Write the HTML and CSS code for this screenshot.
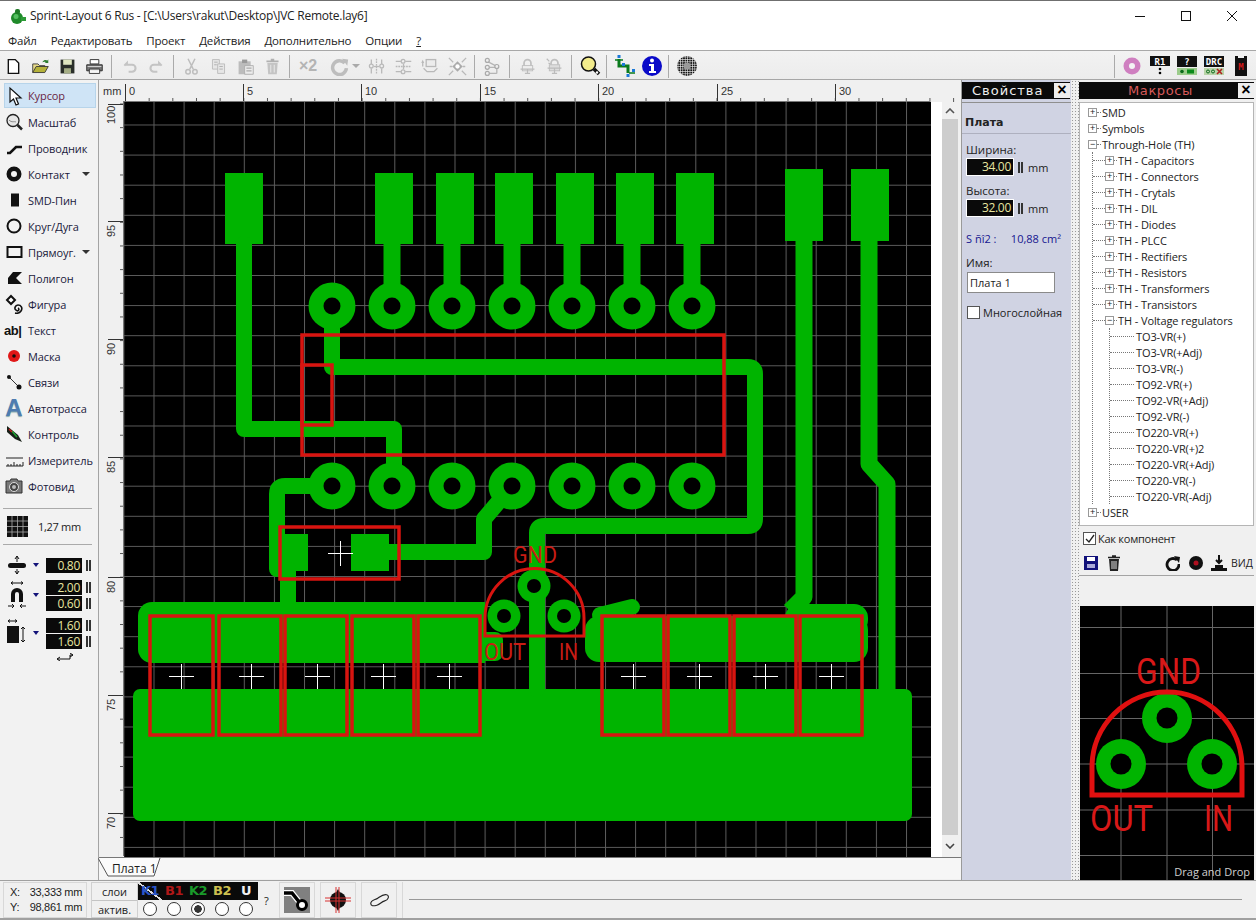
FILE: index.html
```html
<!DOCTYPE html>
<html lang="ru">
<head>
<meta charset="utf-8">
<title>Sprint-Layout 6 Rus</title>
<link rel="stylesheet" href="styles.css">
</head>
<body>
<div class="app">
  <header class="titlebar">
    <svg class="app-icon" viewBox="0 0 18 18" width="18" height="18"><circle cx="8" cy="11" r="6" fill="#1f8a2a"/><circle cx="7" cy="9.5" r="2.5" fill="#55c060"/><rect x="6" y="2" width="5" height="5" rx="2" fill="#1f7a26"/><rect x="12" y="10" width="5" height="4" fill="#2c9a36"/></svg>
    <span class="title-text">Sprint-Layout 6 Rus - [C:\Users\rakut\Desktop\JVC Remote.lay6]</span>
    <div class="win-controls">
      <svg viewBox="0 0 10 10" width="10" height="10"><path d="M0 5.5H10" stroke="#111" fill="none"/></svg>
      <svg viewBox="0 0 10 10" width="10" height="10"><rect x=".5" y=".5" width="9" height="9" stroke="#111" fill="none"/></svg>
      <svg viewBox="0 0 10 10" width="10" height="10"><path d="M0 0L10 10M10 0L0 10" stroke="#111" fill="none"/></svg>
    </div>
  </header>
  <nav class="menubar">
    <span>Файл</span><span>Редактировать</span><span>Проект</span><span>Действия</span><span>Дополнительно</span><span>Опции</span><span class="u">?</span>
  </nav>
  <div class="toolbar">
    <div class="tb"><svg viewBox="0 0 22 22"><path d="M5 3h8l4 4v12H5z" fill="#fff" stroke="#111" stroke-width="1.6"/></svg></div>
    <div class="tb"><svg viewBox="0 0 22 22"><path d="M2 18V8h6l2 2h6v2" fill="#e6d98a" stroke="#333"/><path d="M2 18l4-7h14l-4 7z" fill="#b5b23a" stroke="#333"/><path d="M13 6c2-3 4-3 6-2l1-1v4h-4l1-1c-1-1-3 0-4 0z" fill="#2f7d2f"/></svg></div>
    <div class="tb"><svg viewBox="0 0 22 22"><path d="M3 3h16v16H3z" fill="#2a2f2a"/><rect x="6" y="3" width="10" height="6" fill="#dfe6c0"/><rect x="7" y="13" width="8" height="6" fill="#a5ae86"/></svg></div>
    <div class="tb"><svg viewBox="0 0 22 22"><path d="M6 3h10v5H6z" fill="#fff" stroke="#222"/><path d="M2 9h18v7H2z" fill="#777" stroke="#222"/><path d="M5 14h12v5H5z" fill="#fff" stroke="#222"/><path d="M3 11h16M6 16h10" stroke="#ddd"/></svg></div>
    <i class="sep"></i>
    <div class="tb"><svg viewBox="0 0 22 22"><path d="M5 10l3-3v2h6a4 4 0 010 8h-4" fill="none" stroke="#c4c4c4" stroke-width="2.4"/></svg></div>
    <div class="tb"><svg viewBox="0 0 22 22"><path d="M17 10l-3-3v2H8a4 4 0 000 8h4" fill="none" stroke="#c4c4c4" stroke-width="2.4"/></svg></div>
    <i class="sep"></i>
    <div class="tb"><svg viewBox="0 0 22 22"><g fill="none" stroke="#bdbdbd" stroke-width="1.7"><path d="M7 2l6 12M15 2L9 14"/><circle cx="7" cy="17" r="2.6"/><circle cx="15" cy="17" r="2.6"/></g></svg></div>
    <div class="tb"><svg viewBox="0 0 22 22"><g fill="#e6e6e6" stroke="#b8b8b8"><path d="M4 3h8v11H4z"/><path d="M10 8h8v11h-8z"/></g><path d="M6 6h4M6 9h3M12 11h4M12 14h4" stroke="#aaa"/></svg></div>
    <div class="tb"><svg viewBox="0 0 22 22"><path d="M3 5h14v15H3z" fill="#bcbcbc"/><rect x="7" y="3" width="6" height="4" fill="#9a9a9a"/><path d="M10 10h10v10H10z" fill="#ececec" stroke="#aaa"/><path d="M12 13h6M12 16h6" stroke="#aaa" stroke-width="1.4"/></svg></div>
    <div class="tb"><svg viewBox="0 0 22 22"><path d="M5 7h12l-1 13H6z" fill="#c4c4c4"/><path d="M4 5h14M9 3h4" stroke="#b0b0b0" stroke-width="2"/><path d="M9 9v9M13 9v9" stroke="#eee"/></svg></div>
    <i class="sep"></i>
    <div class="tb tb-x2">×2</div>
    <div class="tb tb-wide"><svg viewBox="0 0 22 22"><path d="M17 7a8 8 0 10 2 6" fill="none" stroke="#bdbdbd" stroke-width="4"/><path d="M14 2l7 1-1 7z" fill="#bdbdbd"/></svg><span class="caret gray"></span></div>
    <div class="tb"><svg viewBox="0 0 22 22"><g fill="none" stroke="#b9b9b9" stroke-width="1.5"><path d="M11 2v18" stroke-dasharray="2 1"/><path d="M5 3v5M5 13v6M17 3v5M17 13v6"/><circle cx="5" cy="10.500" r="2.200"/><circle cx="17" cy="10.500" r="2.200"/><path d="M8 11h6"/></g></svg></div>
    <div class="tb"><svg viewBox="0 0 22 22"><g fill="none" stroke="#b9b9b9" stroke-width="1.5"><path d="M2 11h18" stroke-dasharray="2 1"/><path d="M2 5h6M13 5h7M2 17h6M13 17h7"/><circle cx="10.500" cy="5" r="2.200"/><circle cx="10.500" cy="17" r="2.200"/><path d="M11 8v6"/></g></svg></div>
    <div class="tb"><svg viewBox="0 0 22 22"><g fill="none" stroke="#b9b9b9" stroke-width="1.500"><rect x="6" y="3" width="11" height="8" fill="#ececec"/><path d="M3 13l4 4h8l4-4M2 5v6M1 7l1-2 1 2"/></g></svg></div>
    <div class="tb"><svg viewBox="0 0 22 22"><g fill="none" stroke="#b9b9b9" stroke-width="1.500"><path d="M1 1l5 5M21 1l-5 5M1 21l5-5M21 21l-5-5M2 11h3M17 11h3"/></g><path d="M11 5l6 6-6 6-6-6z" fill="#aaa"/><circle cx="11" cy="11" r="2.500" fill="#fff"/></svg></div>
    <i class="sep"></i>
    <div class="tb"><svg viewBox="0 0 22 22"><g fill="none" stroke="#b5b5b5" stroke-width="1.500"><path d="M5 5l11 6v8M5 12h11M5 19h11"/></g><g fill="#eee" stroke="#aaa" stroke-width="1.400"><circle cx="5" cy="4" r="2.300"/><circle cx="5" cy="12" r="2.300"/><circle cx="5" cy="19" r="2.300"/><circle cx="16" cy="11" r="2.300"/></g></svg></div>
    <i class="sep"></i>
    <div class="tb"><svg viewBox="0 0 22 22"><path d="M7 10V7a4 4 0 018 0v3" fill="none" stroke="#c0c0c0" stroke-width="2"/><rect x="5" y="10" width="12" height="6" fill="#eee" stroke="#bbb"/><path d="M3 14h16M8 19h6M11 14v5" stroke="#bbb" stroke-width="1.400"/></svg></div>
    <div class="tb"><svg viewBox="0 0 22 22"><path d="M7 9V7a4 4 0 018 0v2" fill="none" stroke="#c0c0c0" stroke-width="2"/><rect x="5" y="9" width="12" height="7" fill="#ddd" stroke="#bbb"/><path d="M3 13h16M8 19h6M11 13v6M2 2l3 3M4 7l2 1" stroke="#bbb" stroke-width="1.400"/></svg></div>
    <i class="sep"></i>
    <div class="tb tb-big"><svg viewBox="0 0 22 22"><circle cx="9.500" cy="9" r="7" fill="#f3ec8c" stroke="#111" stroke-width="1.500"/><path d="M15 14l5 5" stroke="#111" stroke-width="3.500"/><circle cx="18" cy="17.500" r="1.200" fill="#fff"/></svg></div>
    <i class="sep"></i>
    <div class="tb tb-big"><svg viewBox="0 0 22 22"><path d="M5 4V11H14V18" fill="none" stroke="#0a7a1c" stroke-width="3"/><path d="M1 5h8M15 18h6" stroke="#0a7a1c" stroke-width="1.500"/><rect x="3.500" y="0" width="3" height="3" fill="#1a78d8"/><rect x="8" y="8" width="3" height="3" fill="#1a78d8"/><rect x="12.500" y="19" width="3" height="3" fill="#1a78d8"/><rect x="18" y="14" width="3" height="3" fill="#1a78d8"/></svg></div>
    <div class="tb tb-big"><svg viewBox="0 0 22 22"><circle cx="11" cy="11" r="10" fill="#0a0ac8"/><circle cx="11" cy="5.500" r="2" fill="#fff"/><path d="M8 9h5v7h2v2H8v-2h2v-5H8z" fill="#fff"/></svg></div>
    <i class="sep"></i>
    <div class="tb tb-big"><svg viewBox="0 0 22 22"><defs><pattern id="dots" width="2.400" height="2.400" patternUnits="userSpaceOnUse"><rect width="1.800" height="1.800" fill="#111"/></pattern></defs><circle cx="11" cy="11" r="10" fill="url(#dots)"/><circle cx="11" cy="11" r="3.500" fill="#9a9a9a"/></svg></div>
    <div class="tb-spacer"></div>
    <i class="sep"></i>
    <div class="tb tb-big"><svg viewBox="0 0 22 22"><circle cx="10" cy="11" r="8.500" fill="#cf7fc0"/><circle cx="10" cy="11" r="3" fill="#f4f4f4"/></svg></div>
    <div class="tb tb-big"><svg viewBox="0 0 22 22"><rect x="1" y="1" width="20" height="10" fill="#111"/><text x="11" y="9.500" class="ico-txt" fill="#fff">R1</text><circle cx="11" cy="14" r="1.300"/><circle cx="11" cy="18" r="1.300"/></svg></div>
    <div class="tb tb-big"><svg viewBox="0 0 22 22"><rect x="1" y="1" width="20" height="11" fill="#111"/><text x="11" y="10" class="ico-txt" fill="#fff">?</text><rect x="1" y="13" width="20" height="7" fill="#9ccc8c"/><circle cx="6" cy="16.500" r="1.800" fill="#0a6a1a"/><rect x="11" y="14.500" width="7" height="4" fill="#0a8a1a"/></svg></div>
    <div class="tb tb-big"><svg viewBox="0 0 22 22"><rect x="1" y="1" width="20" height="11" fill="#111"/><text x="11" y="10" class="ico-txt" fill="#fff">DRC</text><rect x="1" y="13" width="20" height="7" fill="#b8d4a8"/><circle cx="5" cy="16.500" r="1.500" fill="none" stroke="#0a6a1a"/><circle cx="10" cy="16.500" r="1.500" fill="none" stroke="#0a6a1a"/><path d="M14 14l5 5M19 14l-5 5" stroke="#b02020" stroke-width="1.600"/></svg></div>
    <div class="tb tb-big"><svg viewBox="0 0 22 22"><path d="M5 1h3v2h6V1h3v20H5z" fill="#111"/><text x="11" y="15" class="ico-txt" fill="#d01818">M</text></svg></div>
  </div>

  <div class="workspace">
    <aside class="tools">
      <div class="tool active"><svg viewBox="0 0 20 20"><path d="M6 2v14l3.500-3 2.500 6 2.500-1-2.500-6h5z" fill="#fff" stroke="#111" stroke-width="1.200"/></svg><span class="lbl lbl-active">Курсор</span></div>
      <div class="tool"><svg viewBox="0 0 20 20"><circle cx="9" cy="8.500" r="6" fill="#e6e6e6" stroke="#222" stroke-width="1.300"/><path d="M13.500 13l4.500 4.500" stroke="#222" stroke-width="2.500"/><path d="M5 8c3 3 5 1 7 2" stroke="#888" fill="none"/></svg><span class="lbl">Масштаб</span></div>
      <div class="tool"><svg viewBox="0 0 20 20"><path d="M3 15h3l6-6h6" fill="none" stroke="#111" stroke-width="2.600"/></svg><span class="lbl">Проводник</span></div>
      <div class="tool"><svg viewBox="0 0 20 20"><circle cx="10" cy="10" r="5.250" fill="none" stroke="#111" stroke-width="4.500"/></svg><span class="lbl">Контакт</span><span class="caret"></span></div>
      <div class="tool"><svg viewBox="0 0 20 20"><rect x="7" y="3.500" width="8" height="13" fill="#111"/></svg><span class="lbl">SMD-Пин</span></div>
      <div class="tool"><svg viewBox="0 0 20 20"><circle cx="10" cy="10" r="6.500" fill="none" stroke="#111" stroke-width="2"/></svg><span class="lbl">Круг/Дуга</span></div>
      <div class="tool"><svg viewBox="0 0 20 20"><rect x="3.500" y="5" width="14" height="10" fill="none" stroke="#111" stroke-width="2"/></svg><span class="lbl">Прямоуг.</span><span class="caret"></span></div>
      <div class="tool"><svg viewBox="0 0 20 20"><path d="M4 10l5-6h9l-6 6 6 6H4z" fill="#111"/></svg><span class="lbl">Полигон</span></div>
      <div class="tool"><svg viewBox="0 0 20 20"><path d="M7 2l4 4-4 4-4-4z" fill="#fff" stroke="#111" stroke-width="2"/><path d="M14 14a1.500 1.500 0 11-2 2c-2-1-1-5 2-5s5 3 3 6-6 2-6 2" fill="none" stroke="#111" stroke-width="1.600"/></svg><span class="lbl">Фигура</span></div>
      <div class="tool"><span class="ab">ab|</span><span class="lbl">Текст</span></div>
      <div class="tool"><svg viewBox="0 0 20 20"><circle cx="10" cy="10" r="6" fill="#e01818"/><circle cx="10" cy="10" r="1.800" fill="#111"/></svg><span class="lbl">Маска</span></div>
      <div class="tool"><svg viewBox="0 0 20 20"><path d="M5 5l10 10" stroke="#333" stroke-width="1"/><circle cx="5" cy="5" r="2" fill="#111"/><circle cx="15" cy="15" r="2.500" fill="#111"/></svg><span class="lbl">Связи</span></div>
      <div class="tool"><span class="auto-a">A</span><span class="lbl">Автотрасса</span></div>
      <div class="tool"><svg viewBox="0 0 20 20"><path d="M3 2l11 9 4 7-7-3L3 8z" fill="#182018"/><path d="M8 7l5 6" stroke="#20a030" stroke-width="1.500"/><path d="M5 5l3 3" stroke="#c02020" stroke-width="1.500"/></svg><span class="lbl">Контроль</span></div>
      <div class="tool"><svg viewBox="0 0 20 20"><path d="M2 8h17" stroke="#222"/><path d="M2 16h17M4 16v-2M7 16v-2M10 16v-4M13 16v-2M16 16v-2M19 16v-4" stroke="#222" fill="none"/></svg><span class="lbl">Измеритель</span></div>
      <div class="tool"><svg viewBox="0 0 20 20"><path d="M2 5h4l1-2h6l1 2h4v12H2z" fill="#777" stroke="#333"/><circle cx="10" cy="11" r="4.500" fill="#444" stroke="#ddd"/><circle cx="10" cy="11" r="2" fill="#bbb"/></svg><span class="lbl">Фотовид</span></div>

      <hr class="rule rule-a">
      <div class="gridsize">
        <svg viewBox="0 0 21 21" width="21" height="21"><rect width="21" height="21" fill="#111"/><path d="M5 0v21M10.500 0v21M16 0v21M0 5h21M0 10.500h21M0 16h21" stroke="#aaa" stroke-width=".8"/></svg>
        <span>1,27 mm</span>
      </div>
      <hr class="rule rule-b">
      <div class="param">
        <svg class="param-ico" viewBox="0 0 20 20"><rect x="1" y="8" width="18" height="5" rx="2.500" fill="#111"/><path d="M10 1v6M8 4l2-3 2 3M10 14v5M8 16l2 3 2-3" fill="none" stroke="#111"/></svg>
        <span class="caret navy"></span>
        <div class="fields"><div class="field-row"><b class="num">0.80</b><i class="spin"></i></div></div>
      </div>
      <div class="param param-tall">
        <svg class="param-ico tall" viewBox="0 0 20 30"><path d="M4 3h12M4 3l2-1.500M4 3l2 1.500M16 3l-2-1.500M16 3l-2 1.500" stroke="#111" fill="none"/><path d="M5 21v-7a5 5 0 0110 0v7h-2v-7a3 3 0 00-6 0v7z" fill="#111" stroke="#111" stroke-width="2"/><path d="M1 26h6M7 26l-2-2M7 26l-2 2M19 26h-6M13 26l2-2M13 26l2 2" stroke="#111" fill="none"/></svg>
        <span class="caret navy"></span>
        <div class="fields"><div class="field-row"><b class="num">2.00</b><i class="spin"></i></div><div class="field-row"><b class="num">0.60</b><i class="spin"></i></div></div>
      </div>
      <div class="param param-tall">
        <svg class="param-ico tall" viewBox="0 0 20 30"><path d="M1 3h9M1 3l2-1.500M1 3l2 1.500M10 3L8 1.500M10 3L8 4.500" stroke="#111" fill="none"/><rect x="0" y="8" width="12" height="17" fill="#111"/><path d="M16 9v15M14 11l2-2 2 2M14 22l2 2 2-2" stroke="#111" fill="none"/></svg>
        <span class="caret navy"></span>
        <div class="fields"><div class="field-row"><b class="num">1.60</b><i class="spin"></i></div><div class="field-row"><b class="num">1.60</b><i class="spin"></i></div></div>
      </div>
      <div class="swap"><svg viewBox="0 0 20 8" width="20" height="8"><path d="M2 6h13V2h3M2 6l3-2M2 6l3 2M18 2l-3-2M18 2l-3 2" stroke="#111" fill="none"/></svg></div>
    </aside>

    <main class="editor">
      <div class="rul-corner">mm</div>
      <div class="rul-top">
        <svg width="836" height="22" viewBox="124 81 836 22">
          <defs><pattern id="tm" x="125" y="99" width="23.660" height="4" patternUnits="userSpaceOnUse"><rect width="1" height="4" fill="#555"/></pattern></defs>
          <rect x="125" y="99" width="835" height="4" fill="url(#tm)"/>
          <g stroke="#333"><path d="M125.500 85v18M243.500 85v18M361.500 85v18M480.500 85v18M598.500 85v18M717.500 85v18M835.500 85v18"/></g>
          <g class="rul-num"><text x="129" y="96">0</text><text x="247" y="96">5</text><text x="365" y="96">10</text><text x="484" y="96">15</text><text x="602" y="96">20</text><text x="721" y="96">25</text><text x="839" y="96">30</text></g>
        </svg>
      </div>
      <div class="rul-left">
        <svg width="25" height="755" viewBox="99 103 25 755">
          <defs><pattern id="tl" x="120" y="104.500" width="4" height="23.660" patternUnits="userSpaceOnUse"><rect width="4" height="1" fill="#555"/></pattern></defs>
          <rect x="120" y="104" width="4" height="754" fill="url(#tl)"/>
          <g stroke="#333"><path d="M108 105.500h16M108 222.500h16M108 340.500h16M108 458.500h16M108 578.500h16M108 696.500h16M108 814.500h16"/></g>
          <g class="rul-num"><text transform="translate(115 125) rotate(-90)">100</text><text transform="translate(115 238) rotate(-90)">95</text><text transform="translate(115 356) rotate(-90)">90</text><text transform="translate(115 474) rotate(-90)">85</text><text transform="translate(115 594) rotate(-90)">80</text><text transform="translate(115 712) rotate(-90)">75</text><text transform="translate(115 830) rotate(-90)">70</text></g>
        </svg>
      </div>
      <div class="board-wrap">
        <svg class="board" width="807" height="755" viewBox="124 103 807 755">
          <defs>
            <pattern id="grid" x="153.500" y="125.500" width="30.100" height="30.100" patternUnits="userSpaceOnUse"><path d="M.5 0V30.100M0 .5H30.100" stroke="#5c5c5c" fill="none"/></pattern>
          </defs>
          <rect x="124" y="103" width="807" height="755" fill="#000"/>
          <rect x="124" y="103" width="807" height="755" fill="url(#grid)"/>
          <g class="cu">
            <rect x="225" y="174" width="38" height="71"/><rect x="375" y="174" width="38" height="71"/><rect x="436" y="174" width="38" height="71"/><rect x="495" y="174" width="38" height="71"/><rect x="556" y="174" width="38" height="71"/><rect x="616" y="174" width="38" height="71"/><rect x="676" y="174" width="38" height="71"/>
            <rect x="785" y="170" width="38" height="72"/><rect x="851" y="170" width="38" height="72"/>
            <rect x="270" y="535" width="38" height="37"/><rect x="351" y="535" width="38" height="37"/>
            <rect x="138" y="603" width="347" height="61" rx="14"/>
            <rect x="460" y="603" width="25" height="61"/>
            <rect x="470" y="633" width="33" height="29" rx="8"/>
            <rect x="585" y="617" width="283" height="46" rx="14"/>
            <rect x="785" y="605" width="83" height="30" rx="14"/>
            <rect x="133" y="690" width="779" height="132" rx="7"/>
          </g>
          <g class="trace">
            <path d="M244 245V430H394V487"/>
            <path d="M332 307V368H748Q755 368 755 375V520Q755 527 748 527H544Q537 527 537 534V690"/>
            <path d="M332 487H285Q277 487 277 495V570"/>
            <path d="M288 570V610"/>
            <path d="M389 553H484V520L512 487"/>
            <path d="M600 616L632 608"/>
            <path class="wide" d="M392 245V307M452 245V307M512 245V307M572 245V307M632 245V307M692 245V307"/>
            <path class="wide" d="M804 242V598L790 612"/>
            <path class="wide" d="M869 242V465L887 485V690"/>
          </g>
          <g class="cu">
            <circle cx="332" cy="307" r="23.500"/><circle cx="392" cy="307" r="23.500"/><circle cx="452" cy="307" r="23.500"/><circle cx="512" cy="307" r="23.500"/><circle cx="572" cy="307" r="23.500"/><circle cx="632" cy="307" r="23.500"/><circle cx="692" cy="307" r="23.500"/>
            <circle cx="332" cy="487" r="23.500"/><circle cx="392" cy="487" r="23.500"/><circle cx="452" cy="487" r="23.500"/><circle cx="512" cy="487" r="23.500"/><circle cx="572" cy="487" r="23.500"/><circle cx="632" cy="487" r="23.500"/><circle cx="692" cy="487" r="23.500"/>
            <circle cx="534" cy="587" r="16.500"/><circle cx="504" cy="617" r="16.500"/><circle cx="564" cy="617" r="16.500"/>
          </g>
          <g fill="#000">
            <circle cx="332" cy="307" r="8.500"/><circle cx="392" cy="307" r="8.500"/><circle cx="452" cy="307" r="8.500"/><circle cx="512" cy="307" r="8.500"/><circle cx="572" cy="307" r="8.500"/><circle cx="632" cy="307" r="8.500"/><circle cx="692" cy="307" r="8.500"/>
            <circle cx="332" cy="487" r="8.500"/><circle cx="392" cy="487" r="8.500"/><circle cx="452" cy="487" r="8.500"/><circle cx="512" cy="487" r="8.500"/><circle cx="572" cy="487" r="8.500"/><circle cx="632" cy="487" r="8.500"/><circle cx="692" cy="487" r="8.500"/>
            <circle cx="534" cy="587" r="7"/><circle cx="504" cy="617" r="7"/><circle cx="564" cy="617" r="7"/>
          </g>
          <g class="red">
            <rect x="302" y="336" width="422" height="120"/><rect x="302" y="366" width="30" height="60"/>
            <rect x="280" y="528" width="119" height="52"/>
            <rect x="150" y="617" width="63" height="119"/><rect x="219" y="617" width="62" height="119"/><rect x="285" y="617" width="62" height="119"/><rect x="352" y="617" width="62" height="119"/><rect x="418" y="617" width="62" height="119"/>
            <rect x="602" y="617" width="62" height="119"/><rect x="668" y="617" width="62" height="119"/><rect x="734" y="617" width="62" height="119"/><rect x="800" y="617" width="62" height="119"/>
            <path class="thin" d="M485 637V619A49.500 49.500 0 01584 619V637Z"/>
          </g>
          <path class="cross" d="M328 554.500h25M340.500 542v25M169 677.500h25M181.500 665v25M239 677.500h25M251.500 665v25M305 677.500h25M317.500 665v25M371 677.500h25M383.500 665v25M437 677.500h25M449.500 665v25M621 677.500h25M633.500 665v25M687 677.500h25M699.500 665v25M753 677.500h25M765.500 665v25M819 677.500h25M831.500 665v25"/>
          <g class="pcb-txt">
            <text x="513" y="564" textLength="44" lengthAdjust="spacingAndGlyphs">GND</text>
            <text x="484" y="661" textLength="42" lengthAdjust="spacingAndGlyphs">OUT</text>
            <text x="559" y="661" textLength="19" lengthAdjust="spacingAndGlyphs">IN</text>
          </g>
        </svg>
      </div>
      <div class="vscroll">
        <div class="sb-btn"><svg viewBox="0 0 10 6" width="10" height="6"><path d="M1 5l4-4 4 4" fill="none" stroke="#555" stroke-width="1.600"/></svg></div>
        <div class="sb-thumb"></div>
        <div class="sb-btn"><svg viewBox="0 0 10 6" width="10" height="6"><path d="M1 1l4 4 4-4" fill="none" stroke="#444" stroke-width="1.600"/></svg></div>
      </div>
      <div class="tabs">
        <svg class="tab-shape" width="64" height="20" viewBox="0 0 64 20"><path d="M0 0L10 18H56L62 0" fill="#fbfbfb" stroke="#555"/></svg>
        <span class="tab-label">Плата 1</span>
      </div>
    </main>

    <section class="props">
      <div class="dock-head"><span class="dock-title">Свойства</span><span class="dock-x">×</span></div>
      <div class="props-body">
        <div class="props-title">Плата</div>
        <div class="props-form">
          <label class="flabel">Ширина:</label>
          <div class="inrow"><b class="num big">34.00</b><i class="spin"></i><span>mm</span></div>
          <label class="flabel mt">Высота:</label>
          <div class="inrow"><b class="num big">32.00</b><i class="spin"></i><span>mm</span></div>
          <div class="area"><span>S ñî2 :</span><span>10,88 cm²</span></div>
          <label class="flabel">Имя:</label>
          <div class="namebox">Плата 1</div>
          <div class="check"><i class="cb"></i><span>Многослойная</span></div>
        </div>
      </div>
    </section>

    <div class="splitter"></div>

    <section class="macros">
      <div class="dock-head"><span class="dock-title red-title">Макросы</span><span class="dock-x">×</span></div>
      <div class="tree">
        <ul>
          <li><div class="row"><i class="bx">+</i><i class="cn"></i><span>SMD</span></div></li>
          <li><div class="row"><i class="bx">+</i><i class="cn"></i><span>Symbols</span></div></li>
          <li><div class="row"><i class="bx">−</i><i class="cn"></i><span>Through-Hole (TH)</span></div>
            <ul class="lv2">
              <li><div class="row"><i class="cn w12"></i><i class="bx">+</i><i class="cn w3"></i><span>TH - Capacitors</span></div></li>
              <li><div class="row"><i class="cn w12"></i><i class="bx">+</i><i class="cn w3"></i><span>TH - Connectors</span></div></li>
              <li><div class="row"><i class="cn w12"></i><i class="bx">+</i><i class="cn w3"></i><span>TH - Crytals</span></div></li>
              <li><div class="row"><i class="cn w12"></i><i class="bx">+</i><i class="cn w3"></i><span>TH - DIL</span></div></li>
              <li><div class="row"><i class="cn w12"></i><i class="bx">+</i><i class="cn w3"></i><span>TH - Diodes</span></div></li>
              <li><div class="row"><i class="cn w12"></i><i class="bx">+</i><i class="cn w3"></i><span>TH - PLCC</span></div></li>
              <li><div class="row"><i class="cn w12"></i><i class="bx">+</i><i class="cn w3"></i><span>TH - Rectifiers</span></div></li>
              <li><div class="row"><i class="cn w12"></i><i class="bx">+</i><i class="cn w3"></i><span>TH - Resistors</span></div></li>
              <li><div class="row"><i class="cn w12"></i><i class="bx">+</i><i class="cn w3"></i><span>TH - Transformers</span></div></li>
              <li><div class="row"><i class="cn w12"></i><i class="bx">+</i><i class="cn w3"></i><span>TH - Transistors</span></div></li>
              <li><div class="row"><i class="cn w12"></i><i class="bx">−</i><i class="cn w3"></i><span>TH - Voltage regulators</span></div>
                <ul class="lv3">
                  <li><div class="row"><i class="cn w24"></i><span>TO3-VR(+)</span></div></li>
                  <li><div class="row"><i class="cn w24"></i><span>TO3-VR(+Adj)</span></div></li>
                  <li><div class="row"><i class="cn w24"></i><span>TO3-VR(-)</span></div></li>
                  <li><div class="row"><i class="cn w24"></i><span>TO92-VR(+)</span></div></li>
                  <li><div class="row"><i class="cn w24"></i><span>TO92-VR(+Adj)</span></div></li>
                  <li><div class="row"><i class="cn w24"></i><span>TO92-VR(-)</span></div></li>
                  <li><div class="row"><i class="cn w24"></i><span>TO220-VR(+)</span></div></li>
                  <li><div class="row"><i class="cn w24"></i><span>TO220-VR(+)2</span></div></li>
                  <li><div class="row"><i class="cn w24"></i><span>TO220-VR(+Adj)</span></div></li>
                  <li><div class="row"><i class="cn w24"></i><span>TO220-VR(-)</span></div></li>
                  <li><div class="row"><i class="cn w24"></i><span>TO220-VR(-Adj)</span></div></li>
                </ul>
              </li>
            </ul>
          </li>
          <li><div class="row"><i class="bx">+</i><i class="cn"></i><span>USER</span></div></li>
        </ul>
      </div>
      <div class="check comp"><i class="cb"><svg viewBox="0 0 12 12" width="12" height="12"><path d="M2 6l3 3 5-7" fill="none" stroke="#222" stroke-width="1.300"/></svg></i><span>Как компонент</span></div>
      <div class="prev-tools">
        <svg viewBox="0 0 16 16" width="16" height="16"><path d="M1 1h14v14H1z" fill="#10107a"/><rect x="4" y="2" width="8" height="4" fill="#fff"/><rect x="4" y="9" width="8" height="4" fill="#a8a8d8"/></svg>
        <svg class="ml8" viewBox="0 0 14 16" width="14" height="16"><path d="M2 4h10l-1 12H3z" fill="#222"/><path d="M1 2.500h12M5 1h4" stroke="#222" stroke-width="1.500"/><path d="M5 6v8M7 6v8M9 6v8" stroke="#ddd"/></svg>
        <span class="grow"></span>
        <svg viewBox="0 0 16 16" width="16" height="16"><path d="M13 5a6 6 0 102 4" fill="none" stroke="#111" stroke-width="2.800"/><path d="M10 1l6 1-1 6z" fill="#111"/></svg>
        <svg class="ml8" viewBox="0 0 16 16" width="16" height="16"><circle cx="8" cy="8" r="7" fill="#111"/><circle cx="8" cy="8" r="2.500" fill="#b01020"/></svg>
        <svg class="ml6" viewBox="0 0 18 16" width="18" height="16"><path d="M9 0v7M6 5l3 3 3-3" stroke="#111" stroke-width="2" fill="none"/><path d="M5 10h8v3H5zM1 13h16v3H1z" fill="#111"/></svg>
        <span class="vid">ВИД</span>
      </div>
      <div class="prev-bar"></div>
      <div class="preview">
        <svg width="174" height="275" viewBox="1080 605 174 275">
          <rect x="1080" y="605" width="174" height="275" fill="#000"/>
          <path d="M1121 605V880M1167 605V880M1212.500 605V880M1080 626.500H1254M1080 672.500H1254M1080 717.500H1254M1080 763H1254M1080 809H1254M1080 854.500H1254" stroke="#666" fill="none"/>
          <g class="cu"><circle cx="1167" cy="717" r="25"/><circle cx="1121" cy="763" r="25"/><circle cx="1212" cy="763" r="25"/></g>
          <g fill="#000"><circle cx="1167" cy="717" r="10.500"/><circle cx="1121" cy="763" r="10.500"/><circle cx="1212" cy="763" r="10.500"/></g>
          <path d="M1092 794V766A75 75 0 011242 766V794Z" fill="none" stroke="#e01010" stroke-width="5"/>
          <g class="pv-txt">
            <text x="1136" y="683" textLength="65" lengthAdjust="spacingAndGlyphs">GND</text>
            <text x="1090" y="830" textLength="63" lengthAdjust="spacingAndGlyphs">OUT</text>
            <text x="1204" y="830" textLength="29" lengthAdjust="spacingAndGlyphs">IN</text>
          </g>
          <text class="dd" x="1250" y="875">Drag and Drop</text>
        </svg>
      </div>
    </section>
  </div>

  <footer class="status">
    <div class="coords"><div><span>X:</span><span>33,333 mm</span></div><div><span>Y:</span><span>98,861 mm</span></div></div>
    <div class="layers">
      <div class="lhead"><span>слои</span><span>актив.</span></div>
      <div class="lcol"><b class="lname k1">K1</b><i class="radio"></i></div>
      <div class="lcol"><b class="lname b1">B1</b><i class="radio"></i></div>
      <div class="lcol"><b class="lname k2">K2</b><i class="radio on"></i></div>
      <div class="lcol"><b class="lname b2">B2</b><i class="radio"></i></div>
      <div class="lcol"><b class="lname u">U</b><i class="radio"></i></div>
      <span class="qm">?</span>
    </div>
    <div class="sbtn"><svg viewBox="0 0 26 26" width="26" height="26"><rect width="26" height="26" fill="#808080"/><path d="M0 6h8l8 10" fill="none" stroke="#fff" stroke-width="6"/><path d="M0 6h8l8 10" fill="none" stroke="#000" stroke-width="3.500"/><circle cx="18" cy="18" r="4.500" fill="#fff" stroke="#000" stroke-width="3"/></svg></div>
    <div class="sbtn"><svg viewBox="0 0 30 30" width="30" height="30"><circle cx="15" cy="15" r="8" fill="#111"/><path d="M15 4L21 15 15 26 9 15z" fill="#111"/><path d="M2 13h26M2 16h26M13 2v26M16 2v26" stroke="#d83030" stroke-width="1"/></svg></div>
    <div class="sbtn"><svg viewBox="0 0 24 20" width="21" height="18"><path d="M2 14c0-4 5-4 8-6s6-5 10-4 2 6-2 7-5 4-9 5-7 1-7-2z" fill="none" stroke="#222" stroke-width="1.300"/></svg></div>
    <div class="progress"><i></i></div>
  </footer>
</div>
</body>
</html>
```
FILE: styles.css
```css
* { box-sizing: border-box; }
html, body { margin: 0; padding: 0; }
body { background: #f0f0f0; font-family: "Open Sans", "Noto Sans", sans-serif; font-size: 12px; color: #1c1c1c; }
i { font-style: normal; }
.app { width: 1256px; height: 920px; display: flex; flex-direction: column; overflow: hidden; }

.titlebar { height: 30px; background: #fff; border-top: 1px solid #6f6f6f; display: flex; align-items: center; padding-left: 9px; }
.app-icon { margin-right: 3px; }
.title-text { font-size: 12px; letter-spacing: -.25px; color: #222; }
.win-controls { margin-left: auto; display: flex; gap: 36px; padding-right: 19px; }

.menubar { height: 21px; background: #fff; display: flex; gap: 14px; padding-left: 8px; align-items: center; font-size: 11.500px; letter-spacing: -.2px; color: #222; border-bottom: 1px solid #a8a8a8; }
.menubar .u { text-decoration: underline; }

.toolbar { height: 29px; background: linear-gradient(#f2f2f2, #ececec); border-bottom: 1px solid #a6a6a6; display: flex; align-items: center; padding: 2px 2px 0 0; }
.tb { width: 27px; height: 24px; display: flex; align-items: center; justify-content: center; flex: none; }
.tb svg { width: 19px; height: 19px; }
.tb-big svg { width: 22px; height: 22px; }
.tb-wide { width: 40px; gap: 3px; padding-left: 3px; }
.tb-x2 { font-family: "Liberation Sans", sans-serif; font-weight: 700; font-size: 16px; color: #b4b4b4; width: 30px; margin-left: -1px; }
.tb-spacer { flex: 1; }
.sep { width: 1px; height: 23px; background: #aaa; margin: 0 4px 0 3px; flex: none; }
.ico-txt { font-family: "DejaVu Sans Mono", monospace; font-size: 9px; font-weight: 700; text-anchor: middle; }
.caret { width: 0; height: 0; border-left: 4px solid transparent; border-right: 4px solid transparent; border-top: 4px solid #333; flex: none; }
.caret.gray { border-top-color: #aaa; }
.caret.navy { border-top-color: #14147a; border-left-width: 3.500px; border-right-width: 3.500px; }

.workspace { flex: 1; display: flex; min-height: 0; }

.tools { width: 99px; flex: none; border-right: 1px solid #a4a4a4; padding: 3px 2px 0 4px; background: #f2f2f2; }
.tool { height: 26px; display: flex; align-items: center; font-size: 11px; color: #1a1a3c; }
.tool svg { width: 20px; height: 20px; flex: none; }
.tool .caret { margin-left: auto; margin-right: 6px; }
.tool.active { background: #cfe4f6; height: 25px; margin-bottom: 1px; box-shadow: inset 0 0 0 1px #b7d4ea; }
.lbl { margin-left: 4px; letter-spacing: -.1px; }
.lbl-active { color: #6a1f44; }
.ab { width: 20px; font-family: "Liberation Sans", sans-serif; font-weight: 700; font-size: 13px; color: #111; flex: none; white-space: nowrap; letter-spacing: -.4px; }
.auto-a { width: 20px; font-family: "Liberation Sans", sans-serif; font-weight: 700; font-size: 24px; line-height: 22px; text-align: center; color: #4e7cb0; flex: none; text-shadow: 0 1px 1px #8aa; }
.rule { border: 0; border-top: 1px solid #aaa; margin: 0 4px 0 -1px; height: 0; }
.rule-a { margin-top: 9px; }
.gridsize { height: 35px; display: flex; align-items: center; gap: 10px; padding-left: 3px; font-size: 11px; letter-spacing: -.3px; }
.rule-b { margin-bottom: 12px; }
.param { display: flex; align-items: center; height: 16px; padding-left: 3px; margin-bottom: 7px; }
.param-tall { height: 30px; margin-bottom: 8px; }
.param-ico { width: 20px; height: 20px; flex: none; }
.param-ico.tall { height: 30px; }
.param .caret { margin-left: 6px; margin-right: 7px; }
.fields { display: flex; flex-direction: column; gap: 1px; }
.field-row { display: flex; align-items: center; gap: 4px; }
.num { display: block; width: 36px; height: 15px; background: #0a0a0a; color: #e8e6a0; font-weight: 400; font-size: 12px; letter-spacing: -.3px; line-height: 15px; text-align: right; padding-right: 2px; font-family: "Open Sans", sans-serif; }
.num.big { width: 46px; height: 16px; line-height: 16px; outline: 1px solid #fff; }
.spin { display: block; width: 5px; height: 11px; background: linear-gradient(90deg, #333 0 40%, transparent 40% 60%, #333 60%); }
.swap { display: flex; justify-content: center; padding-left: 30px; margin-top: -3px; }

.editor { width: 862px; flex: none; display: grid; grid-template-columns: 25px 807px 11px 16px 3px; grid-template-rows: 22px 755px 22px; background: #f0f0f0; }
.rul-corner { grid-column: 1; grid-row: 1; font-size: 11px; padding: 5px 0 0 4px; font-family: "Liberation Sans", sans-serif; color: #333; }
.rul-top { grid-column: 2 / 6; grid-row: 1; overflow: hidden; }
.rul-left { grid-column: 1; grid-row: 2; }
.rul-num { font-family: "Liberation Sans", sans-serif; font-size: 11px; fill: #333; }
.board-wrap { grid-column: 2; grid-row: 2; box-shadow: -1px -1px 0 #777; }
.board, .rul-top svg, .rul-left svg, .preview svg { display: block; }
.cu { fill: #00b400; }
.trace { fill: none; stroke: #00b400; stroke-width: 16; stroke-linejoin: round; stroke-linecap: round; }
.trace .wide { stroke-width: 17; stroke-linecap: butt; }
.red { fill: none; stroke: #d81410; stroke-width: 3.500; }
.red .thin { stroke-width: 3; }
.cross { stroke: #fff; fill: none; stroke-width: 1; }
.pcb-txt { font-family: "Roboto", sans-serif; font-size: 24px; fill: #c81c14; }
.pv-txt { font-family: "Roboto", sans-serif; font-size: 36px; fill: #d81818; }
.dd { font-family: "Open Sans", sans-serif; font-size: 11px; fill: #cfcfcf; text-anchor: end; }
.vscroll { grid-column: 4; grid-row: 2; display: flex; flex-direction: column; background: #f0f0f0; }
.sb-btn { height: 17px; display: flex; align-items: center; justify-content: center; flex: none; }
.sb-btn:last-child { height: 22px; }
.sb-thumb { flex: 1; background: #cdcdcd; }
.editor::after { content: ""; grid-column: 3; grid-row: 2; background: #fff; }
.tabs { grid-column: 1 / 6; grid-row: 3; display: flex; align-items: flex-start; border-top: 1px solid #777; background: #f6f6f6; }
.tab-shape { display: block; margin-left: -1px; }
.tab-label { margin-left: -50px; padding-top: 2px; font-size: 12px; }

.props { width: 110px; flex: none; background: #d0d3e3; border-left: 1px solid #9a9a9a; display: flex; flex-direction: column; }
.dock-head { margin-top: 2px; height: 17px; background: #0a0a0a; display: flex; align-items: center; justify-content: space-between; flex: none; margin-bottom: 3px; }
.props .dock-head { margin-right: 1px; }
.dock-title { color: #eee; font-family: "DejaVu Sans", sans-serif; font-size: 13px; padding-left: 10px; letter-spacing: 1px; }
.red-title { color: #d85a5a; padding-left: 49px; letter-spacing: .6px; }
.dock-x { width: 16px; height: 15px; background: #eee; color: #000; font: 700 16px/14px "Liberation Sans", sans-serif; text-align: center; }
.props-body { border-top: 1px solid #8f8f8f; background: #d0d3e3; flex: 1; }
.props-title { height: 31px; font-weight: 700; font-size: 11px; padding: 13px 0 0 3px; font-family: "DejaVu Sans", sans-serif; color: #222; border-bottom: 1px solid #aeb0bf; }
.props-form { padding: 8px 5px 0 4px; font-size: 11.500px; }
.flabel { display: block; height: 15px; line-height: 15px; color: #222; }
.flabel.mt { margin-top: 7px; }
.inrow { display: flex; align-items: center; gap: 5px; height: 18px; margin-top: 1px; padding-left: 1px; font-size: 11px; }
.area { display: flex; justify-content: space-between; color: #161690; font-size: 11px; margin: 14px 5px 9px 0; }
.namebox { width: 88px; height: 21px; margin: 2px 0 0 1px; background: #fff; border: 1px solid #8a8a8a; font-size: 11px; line-height: 19px; padding-left: 2px; }
.check { display: flex; align-items: center; gap: 3px; font-size: 11px; }
.props-form .check { margin: 12px 0 0 1px; }
.cb { width: 13px; height: 13px; background: #fff; border: 1px solid #555; display: block; flex: none; }
.splitter { width: 8px; flex: none; background-image: radial-gradient(#999 .6px, transparent .8px); background-size: 3px 3px; }

.macros { width: 177px; flex: none; display: flex; flex-direction: column; }
.macros .dock-head { margin-right: 2px; }
.tree { height: 424px; background: #fff; border: 1px solid #b5b5b5; padding: 1px 0 0 8px; margin-right: 2px; font-size: 11px; overflow: hidden; flex: none; color: #222; }
.tree ul { list-style: none; margin: 0; padding: 0; }
.row { height: 16px; display: flex; align-items: center; white-space: nowrap; letter-spacing: -.1px; }
.bx { width: 9px; height: 9px; border: 1px solid #999; background: #fff; font: 9px/7px "Liberation Sans", sans-serif; text-align: center; color: #222; flex: none; }
.cn { display: block; width: 4px; border-bottom: 1px dotted #777; margin-right: 1px; flex: none; }
.w3 { width: 3px; }
.w12 { width: 12px; margin-right: 0; }
.w24 { width: 24px; margin-right: 2px; }
.lv2 { margin-left: 4px !important; border-left: 1px dotted #777; }
.lv3 { margin-left: 16px !important; border-left: 1px dotted #777; }
.comp { height: 24px; padding: 1px 0 0 4px; flex: none; gap: 2px; letter-spacing: -.25px; }
.prev-tools { height: 24px; display: flex; align-items: center; padding: 0 3px 0 4px; flex: none; margin-top: 1px; }
.grow { flex: 1; }
.ml8 { margin-left: 8px; }
.ml6 { margin-left: 6px; }
.vid { font-size: 10.500px; margin-left: 3px; }
.prev-bar { height: 31px; flex: none; background: #f0f0f0; border-top: 1px solid #a4a4a4; margin-right: 2px; }
.preview { flex: 1; margin-left: 1px; margin-right: 2px; background: #000; overflow: hidden; }

.status { height: 40px; flex: none; background: #f0f0f0; border-top: 1px solid #a0a0a0; border-bottom: 2px solid #a0a0a0; display: flex; align-items: stretch; padding: 1px 0 0 3px; }
.coords { width: 84px; font-family: "Liberation Sans", sans-serif; border: 1px solid #d8d8d8; font-size: 11px; letter-spacing: -.3px; padding: 2px 4px 0 6px; line-height: 15px; }
.coords div { display: flex; justify-content: space-between; }
.layers { display: flex; margin: 0 2px 0 4px; width: 181px; }
.lhead { width: 47px; display: flex; flex-direction: column; font-size: 11px; text-align: center; border: 1px solid #d0d0d0; }
.lhead span { flex: 1; line-height: 17px; }
.lhead span + span { border-top: 1px solid #c4c4c4; }
.lcol { width: 24px; display: flex; flex-direction: column; align-items: center; }
.lname { width: 100%; height: 18px; background: #0a0a0a; font: 700 13px/18px "DejaVu Sans", sans-serif; letter-spacing: -.5px; text-align: center; }
.k1 { color: #2a55c8; background: linear-gradient(to top right, #0a0a0a 46%, #ddd 46% 52%, #0a0a0a 52%); }
.b1 { color: #b01818; }
.k2 { color: #1a9a2a; }
.b2 { color: #cdc050; }
.lname.u { color: #f0f0f0; }
.radio { width: 14px; height: 14px; margin-top: 2px; border-radius: 50%; border: 1px solid #333; background: #fff; display: block; }
.radio.on { background: radial-gradient(circle, #333 0 3.500px, #fff 4px); }
.qm { padding: 11px 0 0 6px; font-size: 11px; }
.sbtn { width: 36px; margin-left: 5px; border: 1px solid #d8d8d8; display: flex; align-items: center; justify-content: center; flex: none; }
.progress { flex: 1; margin-left: 5px; display: flex; align-items: center; padding: 0 14px 2px 6px; border-left: 1px solid #d8d8d8; }
.progress i { display: block; height: 1px; width: 100%; background: #999; }
```
